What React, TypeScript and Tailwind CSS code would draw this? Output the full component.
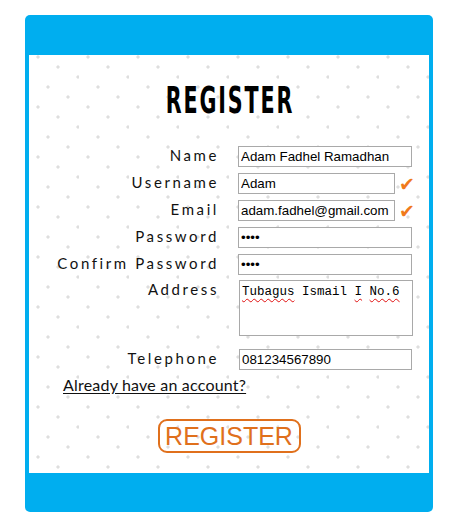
import React from 'react';

const labelCls = "pb-[4px] text-right text-[15px] leading-[14px] tracking-[2.6px] text-[#111] font-['Lato',sans-serif]";
const inputCls = "block h-[21px] border border-[#a9a9a9] bg-white px-[2px] text-[13.33px] text-black font-['Liberation_Sans',Arial,sans-serif] outline-none";

const dots =
    "[background-image:radial-gradient(circle_at_9px_2px,#dedede_1.3px,transparent_1.9px),radial-gradient(circle_at_29px_12px,#dedede_1.3px,transparent_1.9px),radial-gradient(circle_at_49px_22px,#dedede_1.3px,transparent_1.9px),radial-gradient(circle_at_19px_32px,#dedede_1.3px,transparent_1.9px),radial-gradient(circle_at_39px_42px,#dedede_1.3px,transparent_1.9px)] [background-size:50px_50px]";

function Check() {
    return <span className="ml-[4px] mt-[2px] text-[19px] leading-[19px] text-[#f07a1c] font-['DejaVu_Sans',sans-serif]">✔</span>;
}

const wavy = "underline decoration-wavy decoration-[#e01010] decoration-1 underline-offset-[3px]";

export default function App() {
    return (
        <div className="min-h-screen bg-white pt-[15px]">
            <div className="ml-[25px] w-[408px] rounded-[5px] bg-[#00aeef] px-[4px] pt-[40px] pb-[39px]">
                <div className={"bg-white pt-[31px] pb-[20px] " + dots}>
                    <h1 className="flex justify-center h-[30px] items-center">
                        <span className="inline-block origin-center scale-x-[0.62] pl-[3px] text-[37px] leading-[30px] tracking-[3px] font-bold text-black font-['Liberation_Sans_Narrow','DejaVu_Sans_Condensed',sans-serif]">REGISTER</span>
                    </h1>

                    <form className="mt-[30px] grid grid-cols-[190px_1fr] gap-x-[19px] items-center">
                        <label className={labelCls}>Name</label>
                        <input className={inputCls + " w-[174px]"} defaultValue="Adam Fadhel Ramadhan" />

                        <label className={labelCls + " mt-[6px]"}>Username</label>
                        <div className="mt-[6px] flex h-[21px] items-center">
                            <input className={inputCls + " w-[157px]"} defaultValue="Adam" />
                            <Check />
                        </div>

                        <label className={labelCls + " mt-[6px]"}>Email</label>
                        <div className="mt-[6px] flex h-[21px] items-center">
                            <input className={inputCls + " w-[157px]"} defaultValue="adam.fadhel@gmail.com" />
                            <Check />
                        </div>

                        <label className={labelCls + " mt-[6px]"}>Password</label>
                        <input type="password" className={inputCls + " mt-[6px] w-[174px]"} defaultValue="1234" />

                        <label className={labelCls + " mt-[6px]"}>Confirm Password</label>
                        <input type="password" className={inputCls + " mt-[6px] w-[174px]"} defaultValue="1234" />

                        <label className={labelCls + " self-start mt-[7px]"}>Address</label>
                        <div className="mt-[5px] ml-[1px] h-[56px] w-[174px] border border-[#a9a9a9] bg-white px-[2px] pt-[3px] text-[12.5px] leading-[16px] text-black font-['Liberation_Mono',monospace]">
                            <span className={wavy}>Tubagus</span> Ismail <span className={wavy}>I</span> <span className={wavy}>No.6</span>
                        </div>

                        <label className={labelCls + " mt-[13px]"}>Telephone</label>
                        <input className={inputCls + " mt-[13px] ml-[1px] w-[173px]"} defaultValue="081234567890" />
                    </form>

                    <div className="mt-[3px] pl-[34px]">
                        <a href="#" className="text-[16px] leading-[16px] tracking-[0.2px] text-[#111] underline underline-offset-[2px] font-['Lato',sans-serif]">Already have an account?</a>
                    </div>

                    <div className="mt-[22px] flex justify-center">
                        <button type="button" className="h-[34px] w-[143px] rounded-[9px] border-2 border-[#e0701c] bg-transparent text-[25px] leading-[30px] text-[#e0701c] font-['Liberation_Sans',Arial,sans-serif]">REGISTER</button>
                    </div>
                </div>
            </div>
        </div>
    );
}
